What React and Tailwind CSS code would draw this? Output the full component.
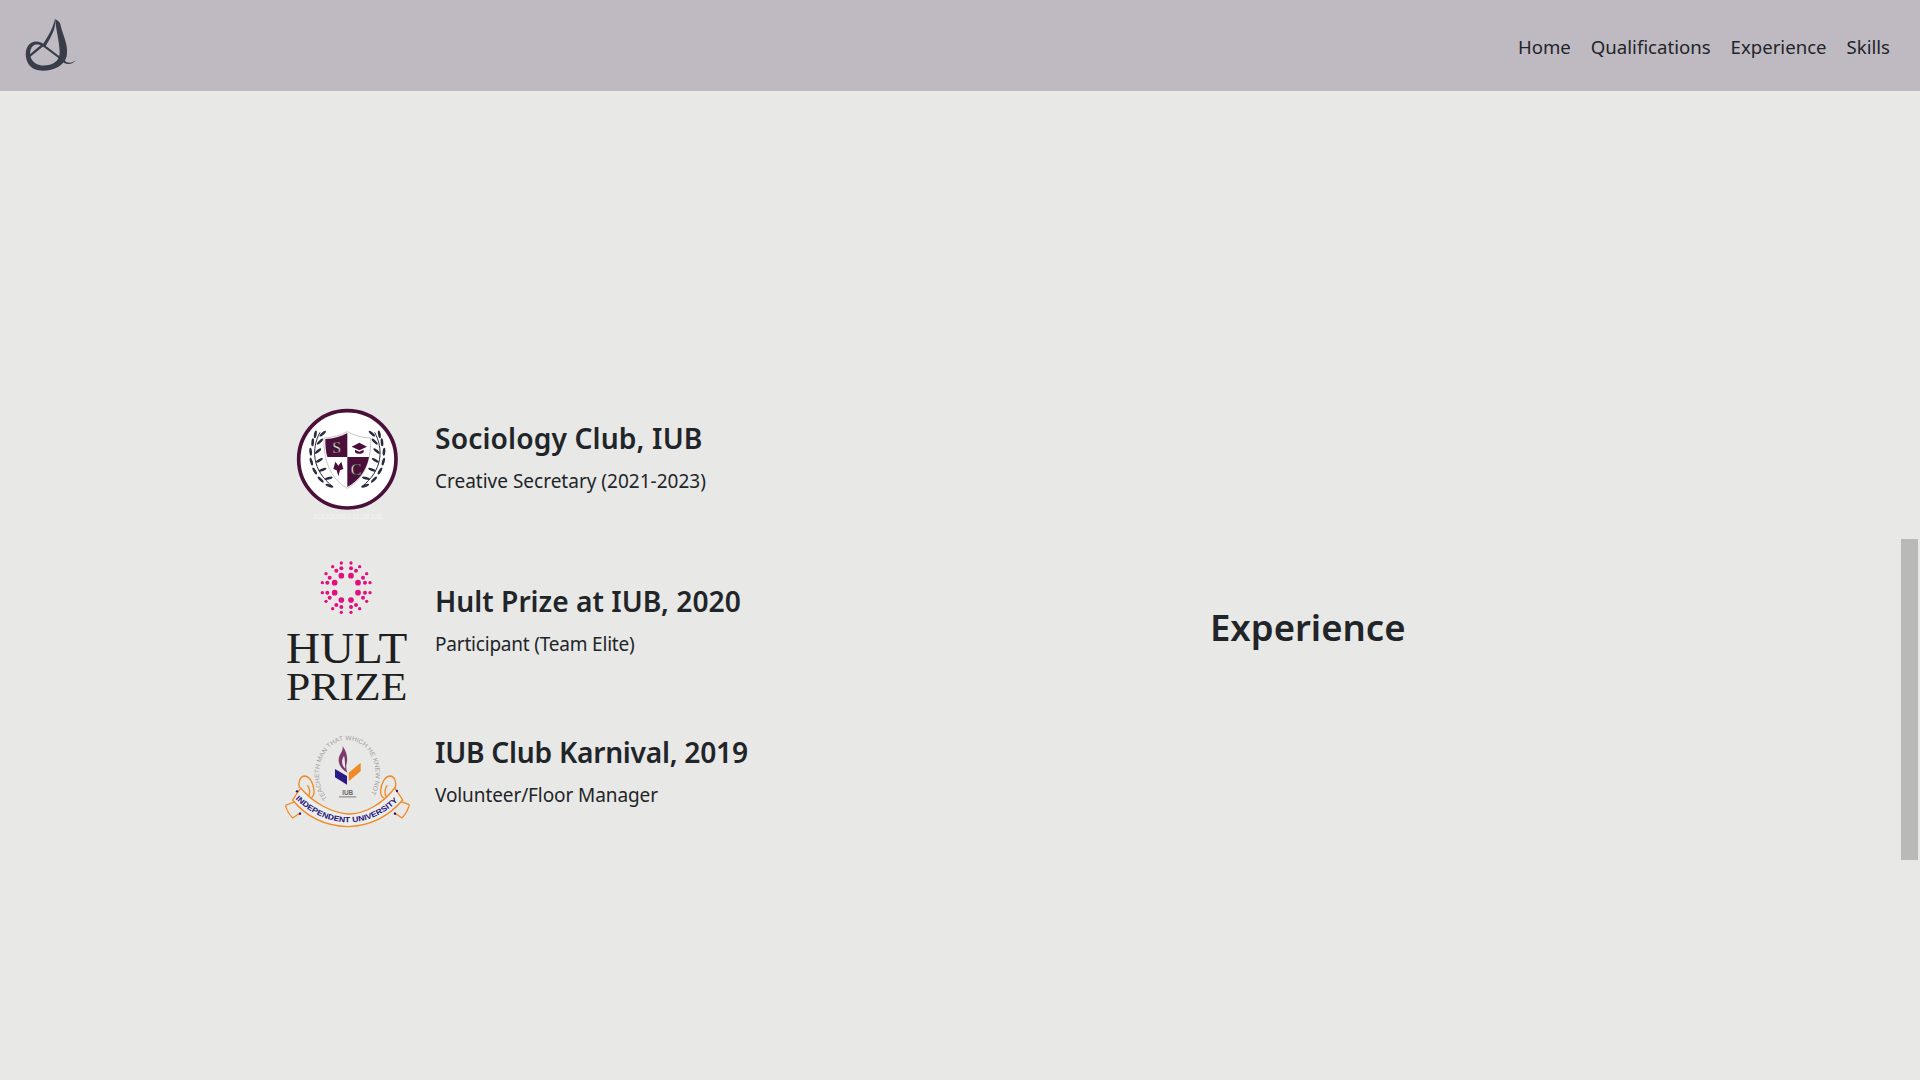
import React from "react";

const font = { fontFamily: '"Noto Sans", "Open Sans", sans-serif' };

function BrandMark() {
  return (
    <svg width="120" height="91" viewBox="0 0 360 273" className="block">
      <g fill="#383d49" stroke="none">
        <path d="M165 57 C172 62 178 64 181 72 C186 100 204 130 201 162 C199 188 178 203 150 210 C124 216 95 211 84 190 C72 166 76 138 94 128 C108 122 122 125 131 133 L127 139 C118 132 106 132 99 138 C88 147 88 168 96 180 C108 197 130 199 149 194 C168 189 179 178 179 156 C178 125 170 100 165 57 Z" />
        <path d="M165 57 C168 86 158 102 135 142 L126 136 C146 108 158 85 165 57 Z" />
        <path d="M87 165 L127 131 L132 137 L90 171 Z" />
        <path d="M126 137 L130 132 L197 183 L194 188 Z" />
        <path d="M194 183 C204 190 216 190 228 180 C218 193 204 195 191 188 Z" />
      </g>
    </svg>
  );
}

function Laurel({ flip }) {
  const leaves = [
    [158, 116, 50], [136, 118, 10], [150, 140, 45], [128, 142, 5], [144, 168, 50], [122, 170, -5],
    [148, 196, 60], [124, 200, -15], [158, 224, 70], [134, 228, -30], [176, 250, 75], [152, 254, -45], [178, 272, -70],
  ];
  return (
    <g transform={flip ? "translate(464 0) scale(-1 1)" : undefined}>
      <path d="M150 112 C124 160 124 226 190 276" fill="none" stroke="#2b2b3f" strokeWidth="3" />
      {leaves.map(([x, y, r], i) => (
        <ellipse key={i} cx={x} cy={y} rx="4" ry="12" fill="#2b2b3f" transform={`rotate(${r} ${x} ${y})`} />
      ))}
    </g>
  );
}

function SociologyLogo() {
  return (
    <svg width="125" height="140" viewBox="45 0 375 420" className="block shrink-0">
      <circle cx="232" cy="193" r="146" fill="#ffffff" stroke="#4b1039" strokeWidth="11" />
      <Laurel />
      <Laurel flip />
      <path d="M232 110 C210 122 188 128 162 129 C160 190 178 250 232 280 C286 250 304 190 302 129 C276 128 254 122 232 110 Z" fill="#fff" stroke="#aaa" strokeWidth="2" />
      <path d="M232 114 C212 125 190 131 166 132 C166 150 167 170 172 186 L232 186 Z" fill="#4b1039" />
      <path d="M232 186 L297 186 C290 225 266 258 232 276 Z" fill="#4b1039" />
      <text x="200" y="174" textAnchor="middle" fontSize="48" fontFamily="Liberation Serif, serif" fill="#e6e6e6" stroke="#111" strokeWidth="1">S</text>
      <text x="258" y="240" textAnchor="middle" fontSize="48" fontFamily="Liberation Serif, serif" fill="#e6e6e6" stroke="#111" strokeWidth="1">C</text>
      <path d="M245 155 L268 143 L291 155 L268 166 Z M255 164 V172 C262 178 274 178 281 172 V164 L268 170 Z" fill="#4b1039" />
      <path d="M196 200 L205 212 L214 200 L220 222 L210 226 L205 244 L200 226 L190 222 Z" fill="#4b1039" />
      <text x="232" y="373" textAnchor="middle" fontSize="19" fontFamily="Liberation Sans, sans-serif" fill="#f4f4f4">SOCIOLOGY CLUB IUB</text>
    </svg>
  );
}

const big = [[214,77],[243,77],[194,98],[264,98],[194,128],[264,128],[214,150],[243,150]];
const mid = [[214,55],[243,55],[199,62],[258,62],[179,83],[279,83],[172,98],[285,98],[172,128],[285,128],[179,143],[279,143],[199,165],[258,165],[214,171],[243,171]];
const small = [[214,39],[243,39],[188,50],[269,50],[168,71],[290,71],[157,98],[300,98],[157,128],[300,128],[168,154],[290,154],[188,176],[269,176],[214,187],[243,187]];

function HultLogo() {
  return (
    <svg width="125" height="160" viewBox="45 0 375 480" className="block shrink-0">
      <g fill="#e20f7f">
        {big.map(([x, y], i) => <circle key={i} cx={x} cy={y} r="8.5" />)}
        {mid.map(([x, y], i) => <circle key={i} cx={x} cy={y} r="6" />)}
        {small.map(([x, y], i) => <circle key={i} cx={x} cy={y} r="5" />)}
      </g>
      <g fill="#1f1f1f" fontFamily="Liberation Serif, serif">
        <text x="48" y="340" fontSize="136" textLength="364" lengthAdjust="spacingAndGlyphs">HULT</text>
        <text x="48" y="450" fontSize="120" textLength="364" lengthAdjust="spacingAndGlyphs">PRIZE</text>
      </g>
    </svg>
  );
}

function IubLogo() {
  return (
    <svg width="125" height="120" viewBox="45 0 375 360" className="block shrink-0">
      <defs>
        <path id="iub-arc" d="M172 236 A 85 103 0 1 1 292 236" />
        <path id="iub-banner" d="M76 236 C124 284 182 307 235 307 C295 307 348 280 390 236" />
      </defs>
      <text fontSize="19" fill="#a0a0a0" fontFamily="Liberation Sans, sans-serif">
        <textPath href="#iub-arc" textLength="435" lengthAdjust="spacingAndGlyphs">TEACHETH MAN THAT WHICH HE KNEW NOT</textPath>
      </text>
      <path d="M218 78 C232 98 234 118 229 134 C228 146 230 152 232 158 C218 150 204 134 206 118 C208 100 220 96 218 78 Z" fill="#7c3a6f" />
      <path d="M222 108 C226 118 224 130 226 146 C216 138 212 122 222 108 Z" fill="#e8e8e6" />
      <path d="M195 147 L231 168 V194 L195 172 Z" fill="#2b1a86" />
      <path d="M236 158 L272 128 V154 L236 184 Z" fill="#ef8a24" />
      <text x="233" y="224" textAnchor="middle" fontSize="19" fontWeight="700" fill="#666" fontFamily="Liberation Sans, sans-serif">IUB</text>
      <rect x="207" y="228" width="52" height="5" fill="#a5a5a5" />
      <g fill="none" stroke="#ef8a24" strokeWidth="4">
        <path d="M88 204 C84 186 90 170 102 168 C118 168 130 186 132 212 C134 232 116 246 100 226 M112 196 C120 204 122 222 114 232" />
        <path d="M376 204 C380 186 374 170 362 168 C346 168 334 186 332 212 C330 232 348 246 364 226 M352 196 C344 204 342 222 350 232" />
        <path d="M46 256 L72 246 L92 216 M46 256 C50 270 58 284 68 294 L92 278" />
        <path d="M418 254 L392 244 L372 216 M418 254 C414 270 406 284 396 294 L372 278" />
      </g>
      <path d="M92 204 C130 250 190 280 236 282 C285 282 340 250 374 204 L398 240 C350 296 295 318 234 320 C170 318 110 292 68 240 Z" fill="#ededeb" stroke="#ef8a24" strokeWidth="4" />
      <text fontSize="23" fontWeight="700" fill="#21127e" fontFamily="Liberation Sans, sans-serif">
        <textPath href="#iub-banner" textLength="345" lengthAdjust="spacingAndGlyphs">INDEPENDENT UNIVERSITY</textPath>
      </text>
      <g fill="#21127e">
        <circle cx="81" cy="214" r="3.5" /><circle cx="381" cy="213" r="3.5" /><circle cx="90" cy="281" r="3.5" /><circle cx="375" cy="281" r="3.5" />
      </g>
    </svg>
  );
}

function Row({ logo, title, sub, className, textClass, titleClass, subClass }) {
  return (
    <div className={`flex gap-[25px] ${className}`}>
      {logo}
      <div className={textClass}>
        <h3 className={`text-[28.2px] leading-[34px] font-semibold text-[#212529] mb-[11px] ${titleClass}`}>{title}</h3>
        <p className={`text-[19px] leading-[30px] text-[#212529] ${subClass}`}>{sub}</p>
      </div>
    </div>
  );
}

export default function App() {
  return (
    <div style={font} className="relative h-screen overflow-hidden bg-[#e8e8e6]">
      <header className="h-[91px] bg-[#bfbac1] flex items-center justify-between pr-[30px]">
        <BrandMark />
        <nav className="flex gap-5 text-[18.6px] text-[#212529] pt-[2px]">
          <a>Home</a>
          <a>Qualifications</a>
          <a>Experience</a>
          <a>Skills</a>
        </nav>
      </header>
      <main className="flex items-center pl-[285px] pt-[304px]">
        <div className="w-[925px] flex flex-col">
          <Row logo={<SociologyLogo />} title="Sociology Club, IUB" sub="Creative Secretary (2021-2023)" textClass="pt-[26px]" titleClass="tracking-[0.13px]" />
          <Row logo={<HultLogo />} title="Hult Prize at IUB, 2020" sub="Participant (Team Elite)" className="mt-[15px]" textClass="pt-[34px]" subClass="tracking-[-0.2px]" />
          <Row logo={<IubLogo />} title="IUB Club Karnival, 2019" sub="Volunteer/Floor Manager" className="mt-[10px]" textClass="pt-[15px]" titleClass="tracking-[-0.26px]" subClass="tracking-[-0.1px]" />
        </div>
        <h2 className="text-[36.5px] leading-[48px] font-semibold text-[#212529] pt-[18px]">Experience</h2>
      </main>
      <div className="absolute right-[2px] top-[539px] w-[17px] h-[321px] bg-[#b9b9b7]" />
    </div>
  );
}
